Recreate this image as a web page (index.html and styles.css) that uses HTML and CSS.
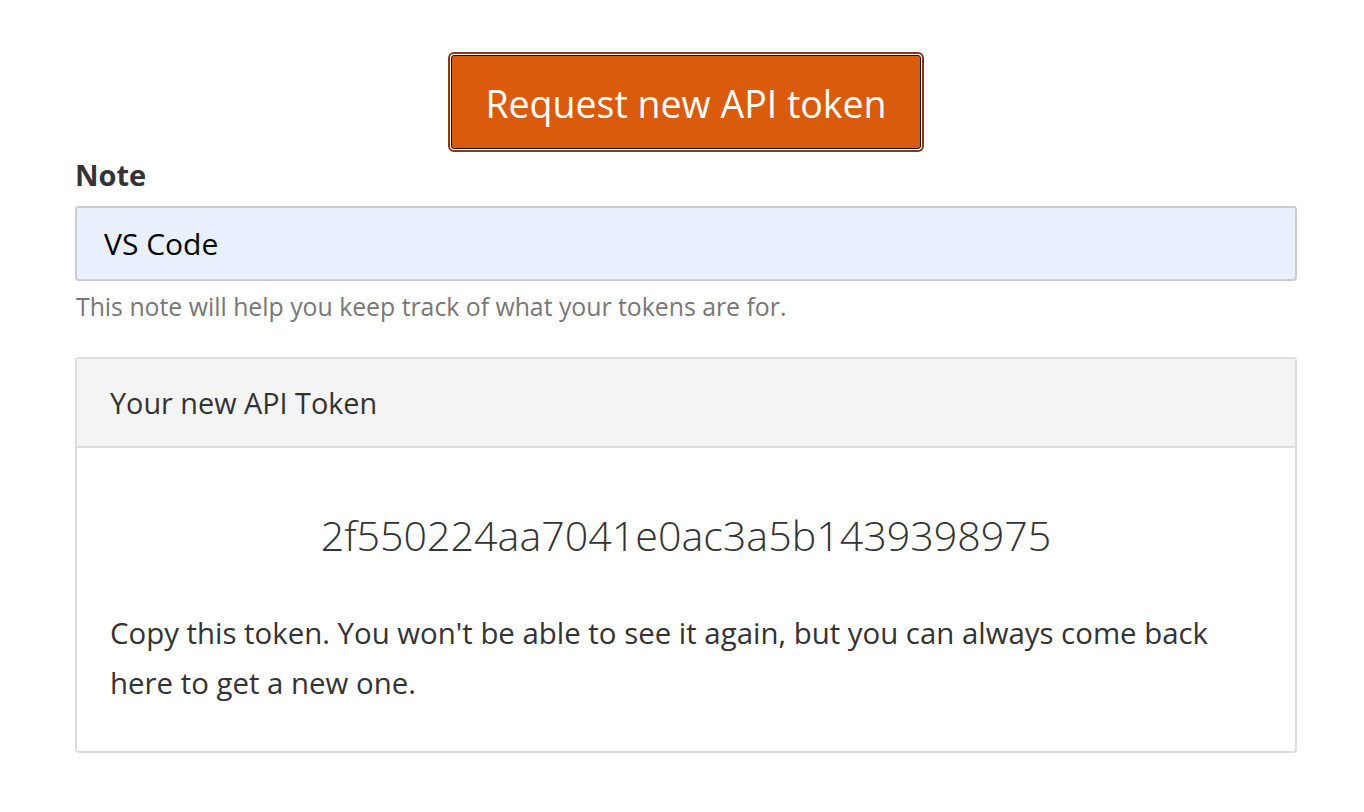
FILE: index.html
```html
<!DOCTYPE html>
<html lang="en">
<head>
<meta charset="utf-8">
<title>API Token</title>
<link rel="stylesheet" href="styles.css">
</head>
<body>
<main class="page">
  <div class="actions">
    <button class="btn-request" type="button">Request new API token</button>
  </div>
  <label class="field-label" for="note">Note</label>
  <input class="field-input" id="note" type="text" value="VS Code">
  <p class="field-help">This note will help you keep track of what your tokens are for.</p>
  <section class="panel">
    <div class="panel-heading">Your new API Token</div>
    <div class="panel-body">
      <div class="token">2f550224aa7041e0ac3a5b1439398975</div>
      <p class="panel-text">Copy this token. You won't be able to see it again, but you can always come back here to get a new one.</p>
    </div>
  </section>
</main>
</body>
</html>
```
FILE: styles.css
```css
html, body {
  margin: 0;
  padding: 0;
  background: #fff;
}
body {
  font-family: "Open Sans", "Noto Sans", sans-serif;
  color: #333;
}
.page {
  width: 1222px;
  margin-left: 75px;
  display: flex;
  flex-direction: column;
}
.actions {
  display: flex;
  justify-content: center;
  padding-top: 55px;
}
.btn-request {
  width: 470px;
  height: 94px;
  background: #d95b0b;
  color: #fff;
  border: 1px solid #111;
  border-radius: 3px;
  box-shadow: 0 0 0 1px #fff, 0 0 0 3px #8c3610;
  font-family: inherit;
  font-size: 37.5px;
  padding: 2px 0 0;
}
.field-label {
  margin-top: 6px;
  font-weight: 700;
  font-size: 29px;
  line-height: 40px;
  color: #333;
}
.field-input {
  margin-top: 11px;
  box-sizing: border-box;
  width: 100%;
  height: 75px;
  background: #e8f0fe;
  border: 2px solid #ccc;
  border-radius: 4px;
  padding: 0 27px;
  font-family: inherit;
  font-size: 30px;
  color: #000;
}
.field-help {
  margin: 9px 0 0 1px;
  font-size: 24.8px;
  line-height: 32px;
  color: #777;
}
.panel {
  margin-top: 35px;
  border: 2px solid #ddd;
  border-radius: 4px;
  box-sizing: border-box;
  height: 396px;
  display: flex;
  flex-direction: column;
}
.panel-heading {
  background: #f4f4f4;
  border-bottom: 2px solid #ddd;
  height: 89px;
  box-sizing: border-box;
  padding: 0 33px;
  display: flex;
  align-items: center;
  font-size: 28.8px;
  color: #333;
}
.panel-body {
  padding: 0 33px;
}
.token {
  margin-top: 57px;
  text-align: center;
  font-size: 41.2px;
  font-weight: 300;
  line-height: 60px;
  color: #333;
}
.panel-text {
  margin: 43px 0 0;
  max-width: 1125px;
  font-size: 29.4px;
  line-height: 50px;
  color: #333;
}
```
